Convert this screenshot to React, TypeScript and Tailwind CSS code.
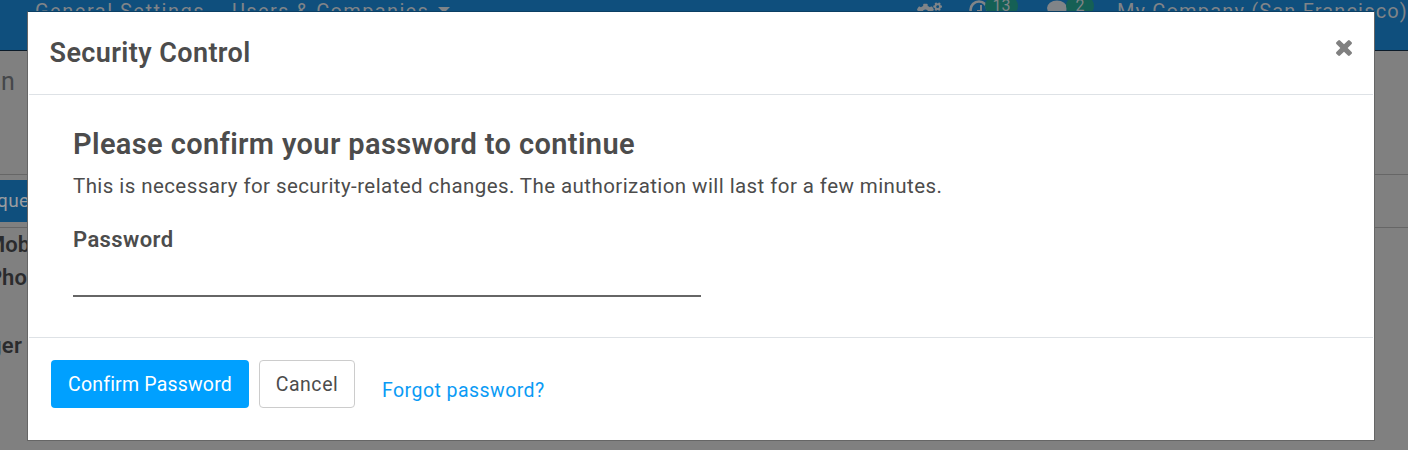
import { FaCogs } from "react-icons/fa";

function CloseIcon() {
  return (
    <svg viewBox="302 302 1188 1188" className="size-[16px]" fill="currentColor" aria-hidden="true">
      <path d="M1490 1322q0 40-28 68l-136 136q-28 28-68 28t-68-28l-294-294-294 294q-28 28-68 28t-68-28l-136-136q-28-28-28-68t28-68l294-294-294-294q-28-28-28-68t28-68l136-136q28-28 68-28t68 28l294 294 294-294q28-28 68-28t68 28l136 136q28 28 28 68t-28 68l-294 294 294 294q28 28 28 68z" transform="translate(0 -64)" />
    </svg>
  );
}

function NavBar() {
  return (
    <header className="flex h-[51px] shrink-0 items-start border-b border-[#0b1b29] bg-[#0f4f7d] text-[20px] leading-[22px] whitespace-nowrap text-[#808488]">
      <span className="ml-[35px] w-[199px] tracking-[1.5px]">General Settings</span>
      <span className="w-[208px] tracking-[1.35px]">Users &amp; Companies</span>
      <svg viewBox="0 0 12 6" className="mt-[7px] h-1.5 w-3 shrink-0" fill="currentColor" aria-hidden="true">
        <path d="M0 0h12L6 6z" />
      </svg>
      <FaCogs className="ml-[467px] size-[25px] shrink-0" />
      <div className="ml-[27px] flex w-[50px] shrink-0">
        <svg viewBox="0 0 20 20" className="size-5 shrink-0" fill="none" stroke="currentColor" aria-hidden="true">
          <circle cx="10" cy="10" r="8.5" strokeWidth="2.6" />
          <path d="M12 5v6H8" strokeWidth="2" />
        </svg>
        <span className="-mt-1 -ml-[4px] h-[20px] w-[33px] shrink-0 rounded-full bg-[#156055] text-center text-[16px] leading-[20px]">13</span>
      </div>
      <div className="ml-[28px] flex w-[47px] shrink-0">
        <svg viewBox="0 0 20 18" className="h-[18px] w-5 shrink-0" fill="currentColor" aria-hidden="true">
          <ellipse cx="10" cy="8" rx="10" ry="7.5" />
          <path d="M4 12l-2 6 7-3z" />
        </svg>
        <span className="-mt-1 -ml-[1px] h-[20px] w-[28px] shrink-0 rounded-full bg-[#156055] text-center text-[16px] leading-[20px]">2</span>
      </div>
      <span className="ml-[23px] tracking-[1.17px]">My Company (San Francisco)</span>
    </header>
  );
}

function Page() {
  return (
    <div className="flex h-full flex-col overflow-hidden bg-[#808080]">
      <NavBar />
      <div className="h-[123px] shrink-0 pt-[15px] pl-px text-[25px] leading-8 text-[#45474a]">n</div>
      <div className="flex h-[54px] shrink-0 items-center border-y border-[#666]">
        <div className="flex h-[42px] w-[120px] items-center bg-[#0f4f7d] text-[19px] text-[#9a9da0]">
          <span className="-ml-[3px] tracking-[0.4px]">quest</span>
        </div>
      </div>
      <div className="flex flex-col text-[22px] leading-[33px] font-semibold text-[#2a2b2d]">
        <span className="-ml-[14px]">Mobile</span>
        <span className="-ml-[12px]">Phone</span>
        <span className="mt-[35px] -ml-[11px] tracking-[0.3px]">ger</span>
      </div>
    </div>
  );
}

function SecurityDialog() {
  return (
    <section
      role="dialog"
      aria-label="Security Control"
      className="absolute top-[11px] left-[27px] flex h-[430px] w-[1348px] flex-col border border-[#666] border-t-[#0c3f64] bg-white bg-clip-padding px-px text-[#4c4c4c]"
    >
      <header className="flex h-[83px] shrink-0 items-start justify-between border-b border-[#dee2e6] pt-[25px] pr-[21px] pl-[20.5px]">
        <h4 className="text-[27px] leading-8 font-semibold tracking-[0.4px]">Security Control</h4>
        <button aria-label="Close" className="mt-[3px] text-[#808080]">
          <CloseIcon />
        </button>
      </header>
      <main className="flex h-[243px] shrink-0 flex-col items-start border-b border-[#dee2e6] pt-[31px] pl-11">
        <h3 className="text-[29px] leading-9 font-semibold tracking-[0.37px]">Please confirm your password to continue</h3>
        <p className="mt-3 text-[20.5px] leading-6 tracking-[0.42px]">
          This is necessary for security-related changes. The authorization will last for a few minutes.
        </p>
        <label htmlFor="password" className="mt-[29px] text-[22px] leading-[26px] font-semibold tracking-[0.4px]">
          Password
        </label>
        <input id="password" type="password" className="h-[44px] w-[628px] border-b-2 border-[#666] bg-transparent outline-none" />
      </main>
      <footer className="flex items-start pt-[22px] pl-[22px] text-[19.5px] leading-6">
        <button className="h-12 w-[198px] rounded-[4px] bg-[#00a0ff] pt-px tracking-[0.2px] text-white">Confirm Password</button>
        <button className="ml-2.5 h-12 w-24 rounded-[4px] border border-[#ccc] pt-px tracking-[0.55px]">Cancel</button>
        <a href="#" className="mt-[19px] ml-[27px] tracking-[0.45px] text-[#0a9bf5]">
          Forgot password?
        </a>
      </footer>
    </section>
  );
}

export default function App() {
  return (
    <div className="relative h-[450px] w-[1408px] overflow-hidden font-[Roboto,sans-serif]">
      <Page />
      <SecurityDialog />
    </div>
  );
}
